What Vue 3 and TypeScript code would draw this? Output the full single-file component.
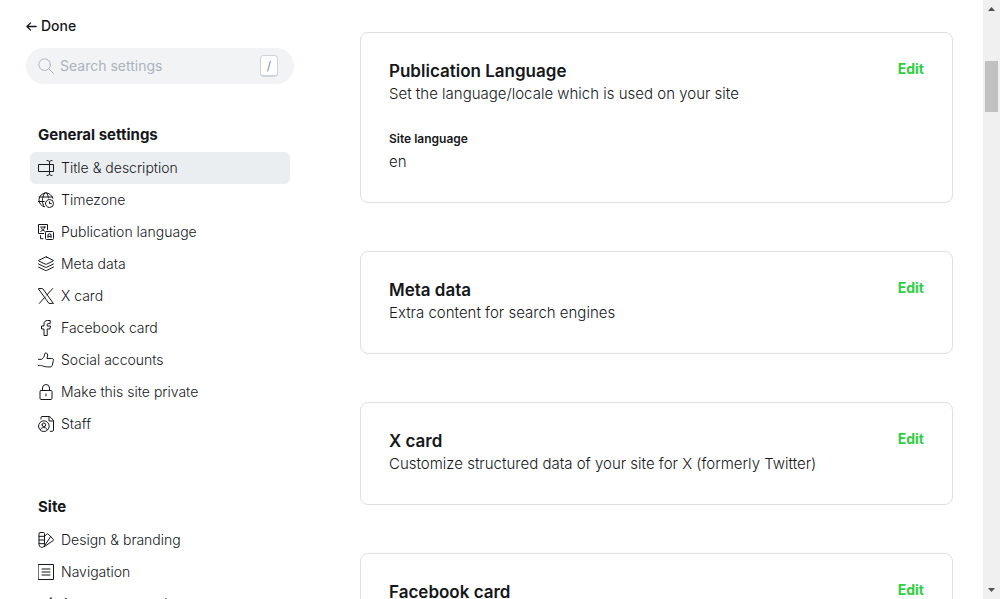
<script setup lang="ts">
import { ref } from 'vue'

interface NavItem {
  id: string
  label: string
  paths: string[]
}

interface NavSection {
  title: string
  items: NavItem[]
}

interface SettingCard {
  id: string
  title: string
  description: string
  field?: { label: string; value: string }
}

const query = ref('')
const active = ref('title')

const sections: NavSection[] = [
  {
    title: 'General settings',
    items: [
      {
        id: 'title',
        label: 'Title & description',
        paths: [
          'M17.25 17.25H.75V6.75h16.5',
          'M17.25 6.75h6v10.5h-6',
          'M17.25 3.5v17',
          'M13.5.75c2.5 0 3.75 1 3.75 2.75C17.25 1.75 18.5.75 21 .75',
          'M13.5 23.25c2.5 0 3.75-1 3.75-2.75 0 1.75 1.25 2.75 3.75 2.75',
        ],
      },
      {
        id: 'timezone',
        label: 'Timezone',
        paths: [
          'M11.25 17.25a6 6 0 1 0 12 0 6 6 0 1 0-12 0',
          'M19.9 17.25h-2.65V14.6',
          'M9.5 22.2A10.5 10.5 0 1 1 22.2 9.5',
          'M1.5 7.500h20',
          'M.8 14.25h8.5',
          'M9.300 22c-3.400-4.500-4.200-14 1.200-21.200',
          'M12.500.8c1.800 2.400 2.900 5.100 3.100 8',
        ],
      },
      {
        id: 'language',
        label: 'Publication language',
        paths: [
          'M8.500 14.250H.75V.75h13.500v7.750',
          'M12.750 11.250h9c.8 0 1.500.7 1.500 1.500v9c0 .8-.7 1.500-1.500 1.500h-9c-.8 0-1.500-.7-1.500-1.500v-9c0-.8.7-1.500 1.500-1.500Z',
          'M15 20.250v-3.500a2.250 2.250 0 0 1 4.500 0v3.500',
          'M15 18.500h4.500',
          'M4 4.500h7',
          'M10 4.500C9.500 7.500 7.500 9.800 4.300 11',
          'M5.500 6.500c1 2.500 2.700 3.700 5 4.500',
          'M3.750 17.500v4.500H7.500',
        ],
      },
      {
        id: 'meta',
        label: 'Meta data',
        paths: [
          'M12.700 1.500 22.700 6.400c.5.300.5.800 0 1.100l-9.700 4.700c-.7.300-1.300.3-2 0L1.300 7.500c-.5-.3-.5-.8 0-1.100L11.300 1.500c.4-.2 1-.2 1.400 0Z',
          'm.9 12 10.100 4.900c.7.300 1.300.3 2 0l10.100-4.900',
          'm.9 16.700 10.100 4.900c.7.300 1.300.3 2 0l10.100-4.900',
        ],
      },
      {
        id: 'x',
        label: 'X card',
        paths: ['M.9.9H7l16.100 22.200H17Z', 'M22 .9 13.300 10.400', 'M10.600 13.500 2 23.100'],
      },
      {
        id: 'facebook',
        label: 'Facebook card',
        paths: [
          'M18.300 9h-4.500V7c0-1 .4-1.600 1.500-1.600h3V.75h-4c-3.400 0-5.300 1.900-5.300 5.200V9H5.250v4.500H9v9.750h4.800V13.500h3.300Z',
        ],
      },
      {
        id: 'social',
        label: 'Social accounts',
        paths: [
          'M.75 11h4.500C8 9.800 9.700 7 10 3.100c.2-2.400 4.400-2.400 4.400 1.700 0 2-.5 3.600-1 4.900h7.300c1.700 0 2.700 1.400 2.400 3l-1.700 7.300c-.4 1.700-1.500 2.500-3.200 2.400-5.400.1-8.300-.3-11.400-1.600-1.800-.5-3.700-.5-6.100-.5',
        ],
      },
      {
        id: 'private',
        label: 'Make this site private',
        paths: [
          'M4.500 9.750h15c.8 0 1.500.7 1.500 1.500v10.500c0 .8-.7 1.500-1.500 1.500h-15c-.8 0-1.500-.7-1.500-1.500V11.250c0-.8.7-1.500 1.500-1.500Z',
          'M6.750 9.750V6a5.250 5.250 0 0 1 10.500 0v3.750',
          'M12 15v3',
        ],
      },
      {
        id: 'staff',
        label: 'Staff',
        paths: [
          'M.75 15.250a8 8 0 1 0 16 0 8 8 0 1 0-16 0',
          'M6 13.250a2.750 2.750 0 1 0 5.500 0 2.750 2.750 0 1 0-5.500 0',
          'M3.500 20.500c1.200-2.400 2.900-3.200 5.250-3.200s4 .8 5.250 3.200',
          'M4.500 4.500V2.250c0-.9.6-1.500 1.500-1.500h11.500l5.750 5.750V21c0 1.100-.7 2-1.800 2H18.500',
          'M16.500.75V7.500h6.750',
        ],
      },
    ],
  },
  {
    title: 'Site',
    items: [
      {
        id: 'design',
        label: 'Design & branding',
        paths: [
          'M1.500 2.250c0-.8.700-1.500 1.500-1.500h5.250c.8 0 1.500.7 1.500 1.500V19c0 5.600-8.250 5.600-8.250 0Z',
          'M1.500 6.500h8.250',
          'M1.500 12h8.250',
          'M1.500 17.500h8.250',
          'm9.750 6.500 3.500-3.400c.6-.6 1.500-.6 2.100 0l3.700 3.700-9.400 14',
          'm18.500 6.500 4.400 4.300c.5.600.5 1.300 0 1.900L9.400 22',
        ],
      },
      {
        id: 'navigation',
        label: 'Navigation',
        paths: ['M.75.75h22.500v22.500H.75Z', 'M6 7.500h12', 'M6 12h12', 'M6 16.500h12'],
      },
      {
        id: 'announcement',
        label: 'Announcement bar',
        paths: [
          'M19.500 2.500v15',
          'M19.500 3.500C16.500 6 13 7 8.250 7H5.500a4.500 4.500 0 0 0 0 9h2.750c4.750 0 8.250.5 11.250 2',
          'M7 16l2 7h3',
        ],
      },
    ],
  },
]

const cards: SettingCard[] = [
  {
    id: 'language',
    title: 'Publication Language',
    description: 'Set the language/locale which is used on your site',
    field: { label: 'Site language', value: 'en' },
  },
  { id: 'meta', title: 'Meta data', description: 'Extra content for search engines' },
  { id: 'x', title: 'X card', description: 'Customize structured data of your site for X (formerly Twitter)' },
  { id: 'facebook', title: 'Facebook card', description: 'Customize structured data of your site' },
]
</script>

<template>
  <div class="page">
    <aside class="sidebar">
      <button class="done" type="button">
        <svg class="done-icon" viewBox="0 0 12 12" aria-hidden="true">
          <path d="M11 6H1M5 2 1 6l4 4" />
        </svg>
        Done
      </button>

      <label class="search">
        <svg class="search-icon" viewBox="0 0 24 24" aria-hidden="true">
          <circle cx="10" cy="10" r="8.700" />
          <path d="m16.300 16.300 7 7" />
        </svg>
        <input v-model="query" type="text" placeholder="Search settings" aria-label="Search settings" />
        <kbd>/</kbd>
      </label>

      <nav class="nav">
        <section v-for="section in sections" :key="section.title">
          <h2>{{ section.title }}</h2>
          <ul>
            <li v-for="item in section.items" :key="item.id">
              <button
                type="button"
                class="nav-item"
                :class="{ active: item.id === active }"
                @click="active = item.id"
              >
                <svg viewBox="0 0 24 24" aria-hidden="true">
                  <path v-for="d in item.paths" :key="d" :d="d" />
                </svg>
                {{ item.label }}
              </button>
            </li>
          </ul>
        </section>
      </nav>
    </aside>

    <main class="content">
      <section v-for="card in cards" :key="card.id" class="card">
        <header>
          <div>
            <h3>{{ card.title }}</h3>
            <p>{{ card.description }}</p>
          </div>
          <button type="button" class="edit">Edit</button>
        </header>
        <dl v-if="card.field">
          <dt>{{ card.field.label }}</dt>
          <dd>{{ card.field.value }}</dd>
        </dl>
      </section>
    </main>

    <div class="scrollbar" aria-hidden="true">
      <svg viewBox="0 0 7 4"><path d="M0 4 3.500 0 7 4Z" /></svg>
      <div class="track"><div class="thumb"></div></div>
      <svg viewBox="0 0 7 4"><path d="M0 0h7L3.500 4Z" /></svg>
    </div>
  </div>
</template>

<style>
body {
  margin: 0;
  overflow: hidden;
}
</style>

<style scoped>
.page {
  display: flex;
  height: 100vh;
  overflow: hidden;
  background: #fff;
  color: #15171a;
  font-family: Inter, 'Liberation Sans', sans-serif;
  font-size: 14px;
  line-height: 20px;
}

button {
  margin: 0;
  padding: 0;
  border: 0;
  background: none;
  color: inherit;
  font: inherit;
  cursor: pointer;
}

.sidebar {
  flex: none;
  width: 268px;
  padding: 16px 40px 0 26px;
}

.done {
  display: flex;
  align-items: center;
  gap: 4px;
  margin-bottom: 12px;
  font-weight: 500;
}

.done-icon {
  width: 11px;
  height: 11px;
  fill: none;
  stroke: #15171a;
  stroke-width: 1.4;
  stroke-linecap: round;
  stroke-linejoin: round;
}

.search {
  display: flex;
  align-items: center;
  height: 36px;
  padding: 0 16px 0 12px;
  border-radius: 18px;
  background: #f1f3f4;
}

.search-icon {
  flex: none;
  width: 16px;
  height: 16px;
  margin-right: 6px;
  fill: none;
  stroke: #abb4be;
  stroke-width: 1.5;
  stroke-linecap: round;
}

.search input {
  flex: 1;
  min-width: 0;
  padding: 0;
  border: 0;
  outline: 0;
  background: none;
  color: #15171a;
  font: inherit;
}

.search input::placeholder {
  color: #abb4be;
  opacity: 1;
}

kbd {
  box-sizing: border-box;
  width: 18px;
  height: 22px;
  border: 1px solid #ced4d9;
  border-bottom-width: 2px;
  border-radius: 4px;
  background: #fff;
  color: #7c8b9a;
  font-family: inherit;
  font-size: 12px;
  line-height: 19px;
  text-align: center;
}

.nav {
  display: flex;
  flex-direction: column;
  gap: 56px;
  margin: 40px 4px 0;
}

h2 {
  margin: 0 8px 6px;
  font-size: 15px;
  font-weight: 700;
  line-height: 22px;
}

ul {
  margin: 0;
  padding: 0;
  list-style: none;
}

.nav-item {
  display: flex;
  align-items: center;
  gap: 7px;
  width: 100%;
  height: 32px;
  padding: 0 8px;
  border-radius: 5px;
  font-weight: 300;
  text-align: left;
}

.nav-item.active {
  background: #ebeef0;
}

.nav-item svg {
  flex: none;
  width: 16px;
  height: 16px;
  fill: none;
  stroke: #15171a;
  stroke-width: 1.5;
  stroke-linecap: round;
  stroke-linejoin: round;
}

.content {
  display: flex;
  flex: 1;
  flex-direction: column;
  gap: 48px;
  min-width: 0;
  padding: 32px 30px 0 26px;
}

.card {
  flex: none;
  padding: 28px;
  border: 1px solid #dddfe4;
  border-radius: 8px;
}

.card header {
  display: flex;
  align-items: flex-start;
  justify-content: space-between;
}

h3 {
  margin: 0 0 1px;
  font-size: 17px;
  font-weight: 600;
  line-height: 20px;
}

.card p {
  margin: 0;
  font-size: 15px;
  font-weight: 300;
  line-height: 24px;
}

.edit {
  color: #30cf43;
  font-weight: 700;
  line-height: 16px;
}

dl {
  margin: 24px 0 0;
}

dt {
  font-size: 12px;
  font-weight: 600;
  line-height: 18px;
}

dd {
  margin: 0;
  padding-top: 2px;
  font-size: 15px;
  font-weight: 300;
  line-height: 24px;
}

.scrollbar {
  display: flex;
  flex: none;
  flex-direction: column;
  align-items: center;
  box-sizing: border-box;
  width: 17px;
  padding: 7px 0;
  background: #f0f0f0;
}

.scrollbar svg {
  width: 7px;
  height: 4px;
  fill: #505050;
}

.track {
  flex: 1;
  width: 13px;
  padding-top: 50px;
}

.thumb {
  height: 51px;
  background: #c1c1c1;
}
</style>
